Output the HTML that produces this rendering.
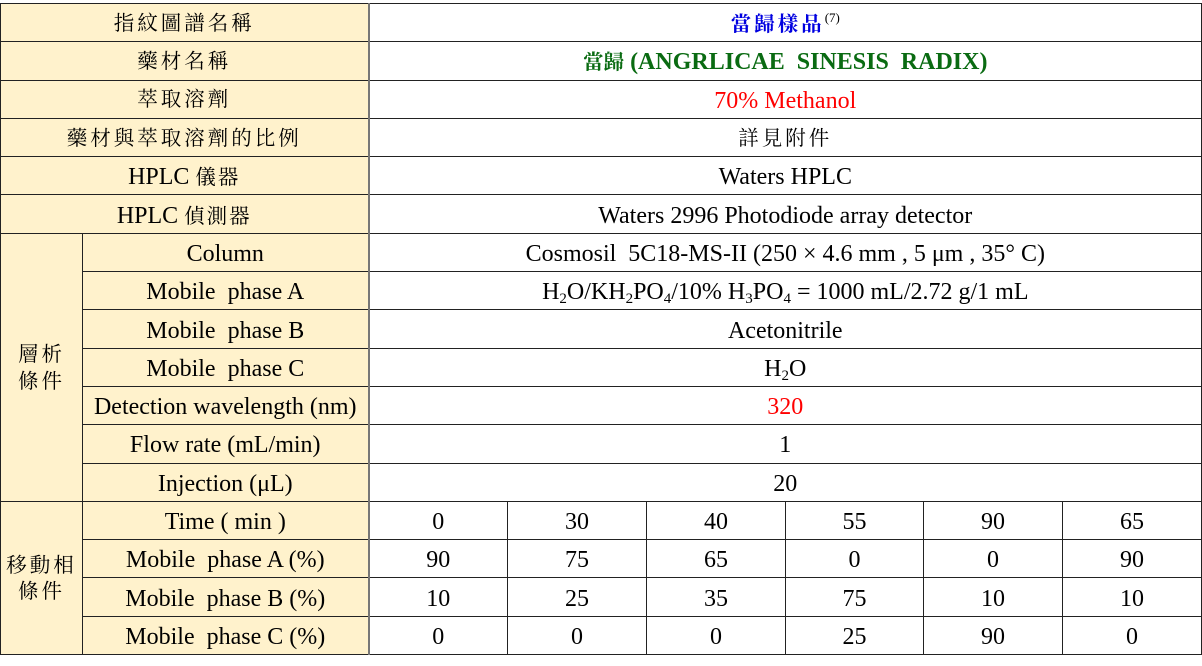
<!DOCTYPE html>
<html><head><meta charset="utf-8"><style>
html,body{margin:0;padding:0;background:#fff;width:1202px;height:666px;overflow:hidden}
table{position:absolute;left:0;top:3px;border-collapse:collapse;table-layout:fixed;width:1201px;font-family:"Liberation Serif","Noto Serif CJK SC","Noto Serif CJK TC",serif;font-size:24px;color:#000}
td{border:1px solid #222;height:34.3px;padding:3px 0 0 0;text-align:center;vertical-align:middle;white-space:nowrap;line-height:1}
td.h{background:#fff2cc}
td.sep{border-right:2px solid #777}
.cjk{letter-spacing:3px;font-size:20.5px}
.blue{color:#0000e0;font-weight:bold}
.green{color:#0a6b12;font-weight:bold}
.red{color:#f00}
sub{font-size:15px;vertical-align:-4px;line-height:0}
sup{font-size:13px;vertical-align:9px;line-height:0}
</style></head><body>
<table>
<colgroup><col style="width:82px"><col style="width:286px"><col style="width:139px"><col style="width:139px"><col style="width:139px"><col style="width:138px"><col style="width:139px"><col style="width:139px"></colgroup>
<tr><td class="h sep cjk" colspan="2">指紋圖譜名稱</td><td colspan="6"><span class="blue cjk">當歸樣品</span><sup>(7)</sup></td></tr>
<tr><td class="h sep cjk" colspan="2">藥材名稱</td><td colspan="6" class="green"><span style="font-size:20.5px">當歸</span> (ANGRLICAE&nbsp; SINESIS&nbsp; RADIX)</td></tr>
<tr><td class="h sep cjk" colspan="2">萃取溶劑</td><td colspan="6" class="red">70% Methanol</td></tr>
<tr><td class="h sep cjk" colspan="2">藥材與萃取溶劑的比例</td><td colspan="6" class="cjk">詳見附件</td></tr>
<tr><td class="h sep" colspan="2">HPLC <span style="font-size:20.5px;letter-spacing:2px">儀器</span></td><td colspan="6">Waters HPLC</td></tr>
<tr><td class="h sep" colspan="2">HPLC <span style="font-size:20.5px;letter-spacing:2px">偵測器</span></td><td colspan="6">Waters 2996 Photodiode array detector</td></tr>
<tr><td class="h cjk" rowspan="7" style="line-height:1.3">層析<br>條件</td><td class="h sep">Column</td><td colspan="6">Cosmosil&nbsp; 5C18-MS-II (250 × 4.6 mm , 5 μm , 35° C)</td></tr>
<tr><td class="h sep">Mobile&nbsp; phase A</td><td colspan="6">H<sub>2</sub>O/KH<sub>2</sub>PO<sub>4</sub>/10% H<sub>3</sub>PO<sub>4</sub> = 1000 mL/2.72 g/1 mL</td></tr>
<tr><td class="h sep">Mobile&nbsp; phase B</td><td colspan="6">Acetonitrile</td></tr>
<tr><td class="h sep">Mobile&nbsp; phase C</td><td colspan="6">H<sub>2</sub>O</td></tr>
<tr><td class="h sep">Detection wavelength (nm)</td><td colspan="6" class="red">320</td></tr>
<tr><td class="h sep">Flow rate (mL/min)</td><td colspan="6">1</td></tr>
<tr><td class="h sep">Injection (μL)</td><td colspan="6">20</td></tr>
<tr><td class="h cjk" rowspan="4" style="line-height:1.3">移動相<br>條件</td><td class="h sep">Time ( min )</td><td>0</td><td>30</td><td>40</td><td>55</td><td>90</td><td>65</td></tr>
<tr><td class="h sep">Mobile&nbsp; phase A (%)</td><td>90</td><td>75</td><td>65</td><td>0</td><td>0</td><td>90</td></tr>
<tr><td class="h sep">Mobile&nbsp; phase B (%)</td><td>10</td><td>25</td><td>35</td><td>75</td><td>10</td><td>10</td></tr>
<tr><td class="h sep">Mobile&nbsp; phase C (%)</td><td>0</td><td>0</td><td>0</td><td>25</td><td>90</td><td>0</td></tr>
</table>
</body></html>
